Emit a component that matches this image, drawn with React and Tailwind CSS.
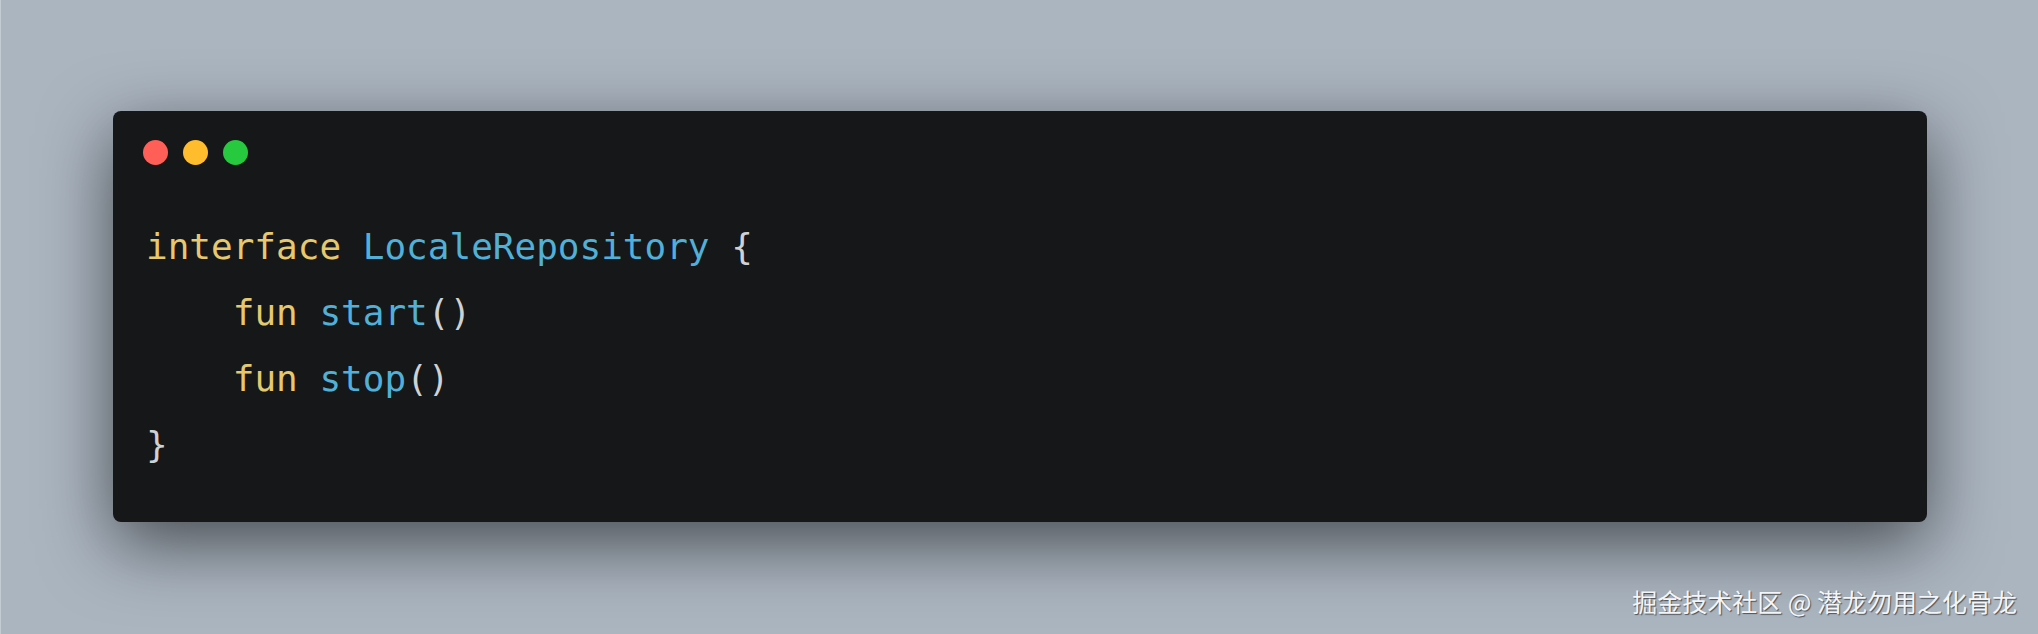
const lines = [
  [
    { t: 'interface', c: 'text-[#e6c86e]' },
    { t: ' ', c: '' },
    { t: 'LocaleRepository', c: 'text-[#51b0d8]' },
    { t: ' {', c: 'text-[#cfd1d3]' },
  ],
  [
    { t: '    ', c: '' },
    { t: 'fun', c: 'text-[#e6c86e]' },
    { t: ' ', c: '' },
    { t: 'start', c: 'text-[#51b0d8]' },
    { t: '()', c: 'text-[#cfd1d3]' },
  ],
  [
    { t: '    ', c: '' },
    { t: 'fun', c: 'text-[#e6c86e]' },
    { t: ' ', c: '' },
    { t: 'stop', c: 'text-[#51b0d8]' },
    { t: '()', c: 'text-[#cfd1d3]' },
  ],
  [{ t: '}', c: 'text-[#cfd1d3]' }],
];

const App = () => {
  return (
    <div className="w-[2038px] h-[634px] bg-[#abb5c0] border-l border-[#c3cbd3] flex flex-col pt-[111px] pl-[112px] overflow-hidden">
      {/* Code window */}
      <div className="mr-[111px] bg-[#161719] rounded-[8px] shadow-[0_22px_70px_rgba(0,0,0,0.58)] pt-[29px] pl-[30px] pb-[44px]">
        {/* Traffic lights */}
        <div className="flex items-center gap-[15px]">
          <span className="w-[25px] h-[25px] rounded-full bg-[#ff5f56]"></span>
          <span className="w-[25px] h-[25px] rounded-full bg-[#ffbd2e]"></span>
          <span className="w-[25px] h-[25px] rounded-full bg-[#27c93f]"></span>
        </div>

        {/* Code */}
        <pre className="mt-[49px] pl-[3px] font-['DejaVu_Sans_Mono',monospace] text-[36px] leading-[66px] whitespace-pre">
          {lines.map((line, i) => (
            <div key={i}>
              {line.map((tok, j) => (
                <span key={j} className={tok.c}>
                  {tok.t}
                </span>
              ))}
            </div>
          ))}
        </pre>
      </div>

      {/* Watermark */}
      <div className="flex justify-end pr-[21px] mt-[64px]">
        <span className="font-['Noto_Sans_CJK_SC',sans-serif] text-[25px] leading-[30px] text-[#f4f5f6] [text-shadow:1px_1px_1px_rgba(0,0,0,0.55)]">
          掘金技术社区 @ 潜龙勿用之化骨龙
        </span>
      </div>
    </div>
  );
};

export default App;
